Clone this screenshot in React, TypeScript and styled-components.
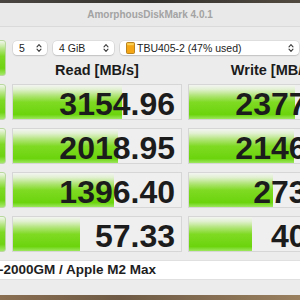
import { Fragment } from "react";
import styled, { createGlobalStyle } from "styled-components";

const Global = createGlobalStyle`
  html, body {
    margin: 0;
    padding: 0;
    overflow: hidden;
    background: #3e3a35;
  }
  #root {
    font-family: "Liberation Sans", Arial, sans-serif;
  }
`;

const Page = styled.div`
  width: 300px;
  height: 300px;
  overflow: hidden;
  display: flex;
  flex-direction: column;
`;

const Desktop = styled.div<{ $h: number; $bg: string }>`
  height: ${({ $h }) => $h}px;
  flex: none;
  background: ${({ $bg }) => $bg};
`;

const Window = styled.div`
  width: 440px;
  margin-left: -70px;
  flex: none;
  background: #ececec;
  display: flex;
  flex-direction: column;
`;

const TitleBar = styled.div`
  height: 23px;
  border-bottom: 1px solid #dadada;
  display: flex;
  align-items: center;
  justify-content: center;
  font-size: 10px;
  font-weight: 700;
  color: #a3a3a3;
  background: #e9e9e9;
`;

const Body = styled.div`
  padding: 13px 12px 15px 10px;
  display: flex;
  flex-direction: column;
  gap: 8px;
`;

const Grid = styled.div`
  display: grid;
  grid-template-columns: 66px 170px 170px;
  grid-auto-rows: 36px;
  column-gap: 6px;
  row-gap: 8px;
`;

const RunButton = styled.div`
  border-radius: 3px;
  border: 1px solid #b9d8a0;
  background: linear-gradient(
    to bottom,
    #f1f6ec 0%,
    #b7e687 22%,
    #7ed925 45%,
    #6fd312 80%,
    #a4e86a 100%
  );
`;

const Controls = styled.div`
  grid-column: 2 / 4;
  display: grid;
  grid-template-columns: 170px 170px;
  column-gap: 6px;
  grid-template-rows: 14px auto;
`;

const SelectRow = styled.div`
  grid-column: 1 / 3;
  margin-top: 1px;
  margin-left: 1px;
  display: flex;
  gap: 6px;
`;

const Select = styled.div<{ $w: number }>`
  width: ${({ $w }) => $w}px;
  height: 14px;
  box-sizing: border-box;
  background: #ffffff;
  border-radius: 4px;
  box-shadow: 0 0 0 0.5px rgba(0, 0, 0, 0.12), 0 1px 1.5px rgba(0, 0, 0, 0.12);
  display: flex;
  align-items: center;
  padding: 0 5px 0 6px;
  font-size: 10.5px;
  line-height: 14px;
  color: #222;
`;

const SelectText = styled.span`
  flex: 1;
  white-space: nowrap;
`;

const DriveIcon = styled.svg`
  width: 9px;
  height: 12px;
  margin-right: 2px;
  flex: none;
`;

const Header = styled.div`
  margin-top: 9px;
  text-align: center;
  font-size: 14.5px;
  line-height: 15px;
  font-weight: 700;
  color: #1b1b1b;
`;

const Cell = styled.div`
  box-sizing: border-box;
  border: 1px solid #d6d6d6;
  background: #efefef;
  display: grid;
  overflow: hidden;
`;

const Bar = styled.div`
  grid-area: 1 / 1;
  height: 100%;
  background: linear-gradient(
    to bottom,
    #f3f4f1 0%,
    #e2f1d2 12%,
    #a9e36a 32%,
    #7fda22 48%,
    #6bd40d 82%,
    #9be65c 94%,
    #c9f0a6 100%
  );
`;

const Value = styled.div`
  grid-area: 1 / 1;
  text-align: right;
  padding: 2px 6px 0 0;
  font-size: 32px;
  line-height: 34px;
  font-weight: 700;
  color: #1c1c1c;
  white-space: nowrap;
`;

const Comment = styled.div`
  height: 20px;
  margin: 0 -12px 0 -10px;
  padding-left: 69px;
  background: #ffffff;
  border-top: 1px solid #e0e0e0;
  border-bottom: 1px solid #e0e0e0;
  box-sizing: border-box;
  font-size: 13.5px;
  line-height: 18px;
  font-weight: 700;
  color: #1e1e1e;
  white-space: nowrap;
`;

function Chevrons() {
  return (
    <svg width="6" height="10" viewBox="0 0 6 10" style={{ flex: "none" }}>
      <path
        d="M1 3.8 L3 1.6 L5 3.8 M1 6.2 L3 8.4 L5 6.2"
        fill="none"
        stroke="#3a3a3a"
        strokeWidth="1.1"
        strokeLinecap="round"
        strokeLinejoin="round"
      />
    </svg>
  );
}

const rows = [
  { read: "3154.96", rw: 0.65, write: "2377.51", ww: 0.63 },
  { read: "2018.95", rw: 0.625, write: "2146.88", ww: 0.625 },
  { read: "1396.40", rw: 0.6, write: "273.17", ww: 0.5 },
  { read: "57.33", rw: 0.4, write: "40.62", ww: 0.375 },
];

export default function App() {
  return (
    <Page>
      <Global />
      <Desktop $h={3} $bg="linear-gradient(90deg, #4a4540, #35332f 50%, #514a40)" />
      <Window>
        <TitleBar>AmorphousDiskMark 4.0.1</TitleBar>
        <Body>
          <Grid>
            <RunButton />
            <Controls>
              <SelectRow>
                <Select $w={34}>
                  <SelectText>5</SelectText>
                  <Chevrons />
                </Select>
                <Select $w={61}>
                  <SelectText>4 GiB</SelectText>
                  <Chevrons />
                </Select>
                <Select $w={179}>
                  <DriveIcon viewBox="0 0 9 12">
                    <rect x="0.5" y="0.5" width="8" height="11" rx="1" fill="#f4a614" stroke="#a86e06" strokeWidth="0.8" />
                    <rect x="1.2" y="1.2" width="6.6" height="2" fill="#fbd25a" />
                  </DriveIcon>
                  <SelectText>TBU405-2 (47% used)</SelectText>
                  <Chevrons />
                </Select>
              </SelectRow>
              <Header>Read [MB/s]</Header>
              <Header>Write [MB/s]</Header>
            </Controls>
            {rows.map((r) => (
              <Fragment key={r.read}>
                <RunButton />
                <Cell>
                  <Bar style={{ width: `${r.rw * 100}%` }} />
                  <Value>{r.read}</Value>
                </Cell>
                <Cell>
                  <Bar style={{ width: `${r.ww * 100}%` }} />
                  <Value>{r.write}</Value>
                </Cell>
              </Fragment>
            ))}
          </Grid>
          <Comment>-2000GM / Apple M2 Max</Comment>
        </Body>
      </Window>
      <Desktop $h={10} $bg="linear-gradient(90deg, #8a6f52, #6e5a45 40%, #9a805f)" />
    </Page>
  );
}
